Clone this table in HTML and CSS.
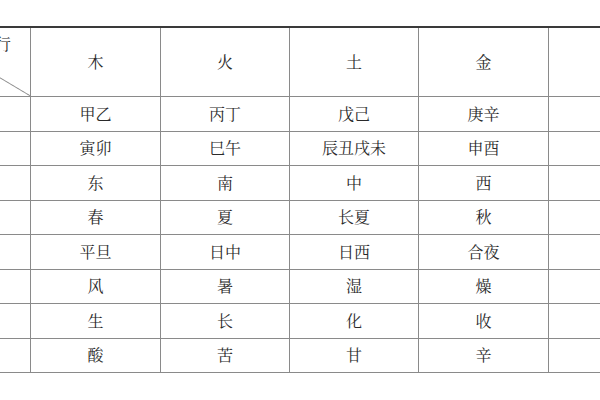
FILE: index.html
```html
<!DOCTYPE html>
<html lang="zh">
<head>
<meta charset="utf-8">
<title>五行对照表</title>
<link rel="stylesheet" href="styles.css">
</head>
<body>
<table class="wx">
  <colgroup>
    <col class="c-corner">
    <col class="c-a">
    <col class="c-b">
    <col class="c-b">
    <col class="c-a">
    <col class="c-a">
  </colgroup>
  <thead>
    <tr class="head">
      <th class="corner"><span class="corner-label">五行</span></th>
      <th>木</th>
      <th>火</th>
      <th>土</th>
      <th>金</th>
      <th></th>
    </tr>
  </thead>
  <tbody>
    <tr><td></td><td>甲乙</td><td>丙丁</td><td>戊己</td><td>庚辛</td><td></td></tr>
    <tr><td></td><td>寅卯</td><td>巳午</td><td>辰丑戌未</td><td>申酉</td><td></td></tr>
    <tr><td></td><td>东</td><td>南</td><td>中</td><td>西</td><td></td></tr>
    <tr><td></td><td>春</td><td>夏</td><td>长夏</td><td>秋</td><td></td></tr>
    <tr><td></td><td>平旦</td><td>日中</td><td>日西</td><td>合夜</td><td></td></tr>
    <tr><td></td><td>风</td><td>暑</td><td>湿</td><td>燥</td><td></td></tr>
    <tr><td></td><td>生</td><td>长</td><td>化</td><td>收</td><td></td></tr>
    <tr><td></td><td>酸</td><td>苦</td><td>甘</td><td>辛</td><td></td></tr>
  </tbody>
</table>
</body>
</html>
```

FILE: styles.css
```css
html, body {
  margin: 0;
  padding: 0;
  background: #ffffff;
  overflow: hidden;
  width: 600px;
  height: 400px;
}

body {
  font-family: "Noto Serif CJK SC", "AR PL UMing CN", "Noto Sans CJK SC", serif;
  color: #2a2a2a;
}

.wx {
  border-collapse: collapse;
  table-layout: fixed;
  width: 763px;
  margin-top: 26px;
  margin-left: -85px;
  font-size: 16px;
  border-top: 2px solid #3a3a3a;
}

.c-corner { width: 115px; }
.c-a { width: 130px; }
.c-b { width: 129px; }

.wx th,
.wx td {
  border: 1px solid #8a8a8a;
  padding: 0;
  text-align: center;
  vertical-align: middle;
  font-weight: normal;
  line-height: 1;
}

.wx thead th {
  border-top: 2px solid #3a3a3a;
}

.head th {
  height: 68px;
}

.wx tbody td {
  height: 33.5px;
}

.corner {
  position: relative;
  background: linear-gradient(to top right,
    transparent calc(50% - 0.7px),
    #6a6a6a 50%,
    transparent calc(50% + 0.7px));
}

.corner-label {
  position: absolute;
  top: 8px;
  right: 19px;
}
```
